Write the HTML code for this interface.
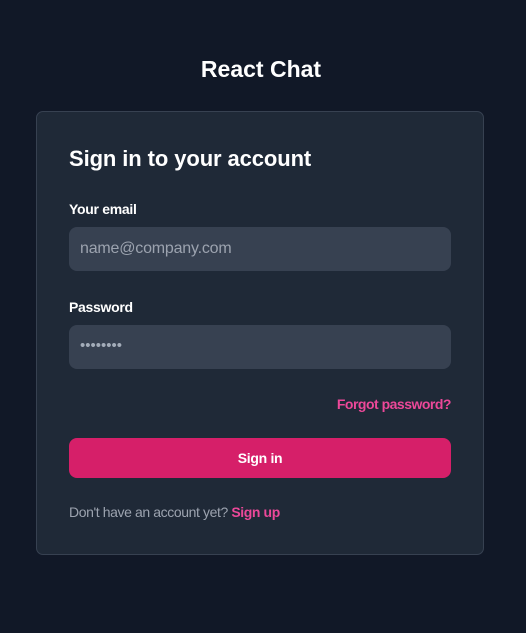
<!DOCTYPE html>
<html><head><meta charset="utf-8"><style>
*{box-sizing:border-box;margin:0;padding:0}
body{width:526px;height:633px;background:#111827;font-family:"Liberation Sans",sans-serif;position:relative;overflow:hidden}
.t{position:absolute;top:56px;left:0;width:526px;text-align:center;color:#fff;font-size:23px;font-weight:bold;padding-right:4px}
.card{position:absolute;left:36px;top:111px;width:448px;height:444px;background:#1f2937;border:1px solid #374151;border-radius:7px}
.h{position:absolute;left:32px;top:34px;color:#fff;font-size:22px;font-weight:bold;letter-spacing:-0.1px}
.l{position:absolute;left:32px;color:#fff;font-size:14px;font-weight:bold;letter-spacing:-0.3px}
.i{position:absolute;left:32px;width:382px;height:44px;background:#374151;border-radius:8px;color:#9ca3af;font-size:16px;padding:13px 11px;letter-spacing:-0.2px}
.f{position:absolute;right:32px;top:284px;color:#ec4899;font-size:14px;font-weight:bold;letter-spacing:-0.5px}
.b{position:absolute;left:32px;top:326px;width:382px;height:40px;background:#d61f69;border-radius:8px;color:#fff;font-size:14px;font-weight:bold;text-align:center;line-height:40px;letter-spacing:-0.3px}
.s{position:absolute;left:32px;top:392px;color:#9ca3af;font-size:14px;letter-spacing:-0.4px}
.s b{color:#ec4899}
</style></head><body>
<div class="t">React Chat</div>
<div class="card">
<div class="h">Sign in to your account</div>
<div class="l" style="top:89px">Your email</div>
<div class="i" style="top:115px">name@company.com</div>
<div class="l" style="top:187px">Password</div>
<div class="i" style="top:213px;letter-spacing:0;font-size:15px;padding-top:12px;color:#a3acb9">••••••••</div>
<div class="f">Forgot password?</div>
<div class="b">Sign in</div>
<div class="s">Don't have an account yet? <b>Sign up</b></div>
</div>
</body></html>
